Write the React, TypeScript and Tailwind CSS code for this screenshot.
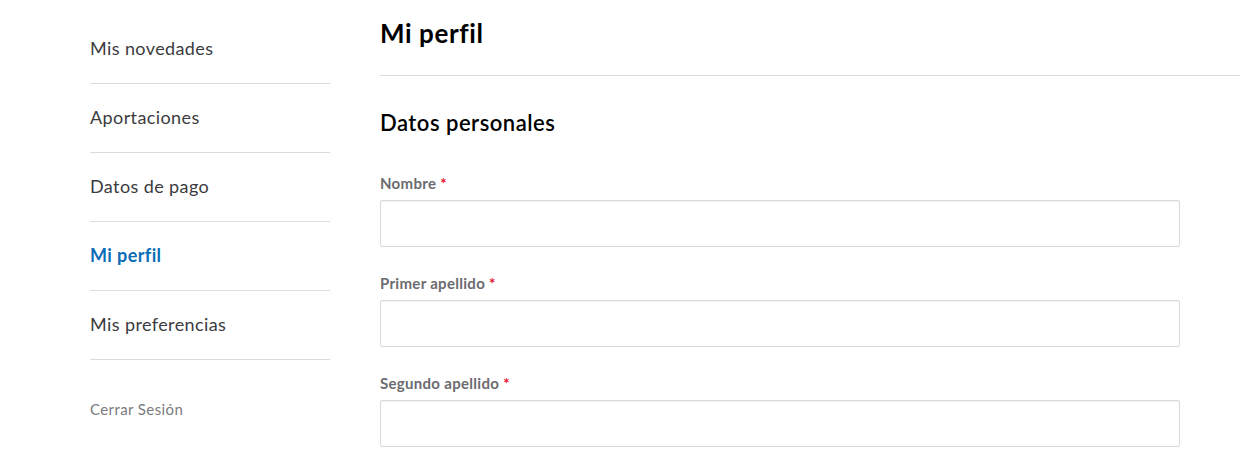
import type { ReactNode } from 'react';

const navItems = [
  { label: 'Mis novedades' },
  { label: 'Aportaciones' },
  { label: 'Datos de pago' },
  { label: 'Mi perfil', active: true },
  { label: 'Mis preferencias' },
];

const fields = ['Nombre', 'Primer apellido', 'Segundo apellido'];

function Field({ label }: { label: string }): ReactNode {
  return (
    <div className="flex flex-col">
      <label className="h-[20px] text-[15px] font-bold leading-[20px] tracking-[0.3px] text-[#6b6b70]">
        {label} <span className="text-[#e8112d]">*</span>
      </label>
      <input
        type="text"
        className="mt-[7px] h-[47px] w-[800px] rounded-[2px] border border-[#d9d9d9] bg-white px-3 shadow-[inset_0_1px_1px_rgba(0,0,0,0.06)] outline-none"
      />
    </div>
  );
}

export default function App() {
  return (
    <div className="flex h-[468px] w-[1240px] overflow-hidden bg-white font-['Lato','Liberation_Sans',sans-serif] text-[#2b2b2f]">
      <aside className="ml-[90px] w-[240px] shrink-0 pt-[15px]">
        <nav className="flex flex-col">
          {navItems.map((item) => (
            <a
              key={item.label}
              href="#"
              className={
                item.active
                  ? 'flex h-[69px] items-center border-b border-[#dcdcdc] pb-[2px] text-[18px] font-bold tracking-[0.4px] text-[#0b6db7]'
                  : 'flex h-[69px] items-center border-b border-[#dcdcdc] pb-[2px] text-[18px] tracking-[0.4px] text-[#3b3b40]'
              }
            >
              {item.label}
            </a>
          ))}
        </nav>
        <a href="#" className="mt-[38px] block text-[15px] tracking-[0.4px] text-[#7a7a7e]">
          Cerrar Sesión
        </a>
      </aside>

      <main className="ml-[50px] flex-1">
        <div className="flex h-[76px] items-start border-b border-[#dcdcdc] pt-[16px]">
          <h1 className="text-[26px] font-bold leading-[34px] tracking-[0.6px] text-black">Mi perfil</h1>
        </div>
        <h2 className="mt-[33px] text-[22px] font-semibold leading-[28px] tracking-[0.5px] text-black">
          Datos personales
        </h2>
        <div className="mt-[36px] flex flex-col gap-[26px]">
          {fields.map((f) => (
            <Field key={f} label={f} />
          ))}
        </div>
      </main>
    </div>
  );
}
